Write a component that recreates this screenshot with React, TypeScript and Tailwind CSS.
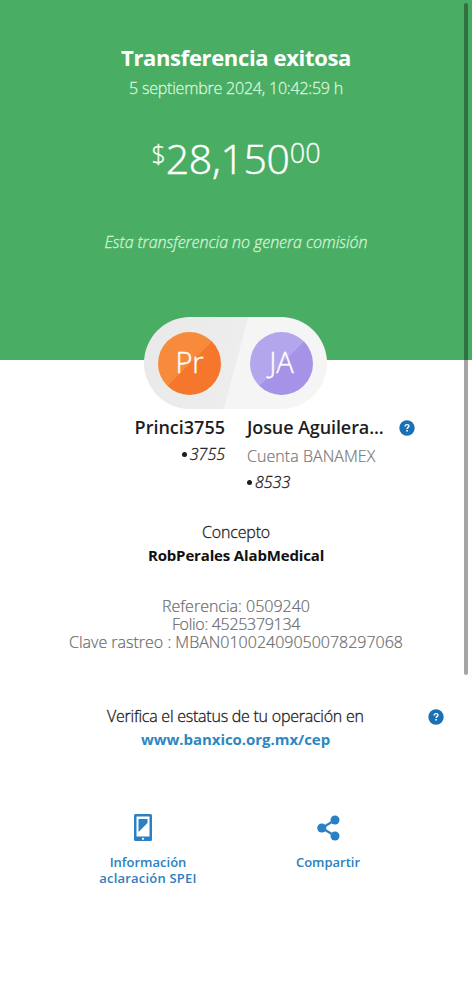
interface AvatarProps {
  initials: string;
  className: string;
}

function Avatar({ initials, className }: AvatarProps) {
  return (
    <div className={`flex size-[63px] items-center justify-center rounded-full pb-[3px] text-[29px] font-light leading-none text-white [-webkit-text-stroke:0.4px] ${className}`}>
      {initials}
    </div>
  );
}

function CardNumber({ digits }: { digits: string }) {
  return (
    <p className="flex items-center font-light italic leading-6 [-webkit-text-stroke:0.3px]">
      <span className="mr-[3px] size-[5px] rounded-full bg-[#1d1d1d]" />
      {digits}
    </p>
  );
}

function HelpIcon() {
  return (
    <svg viewBox="0 0 16 16" className="size-4 shrink-0">
      <circle cx="8" cy="8" r="7.7" fill="#1b70b3" />
      <path d="M6.1 6.5C6.1 5.2 7 4.6 8.1 4.6c1.1 0 1.9.6 1.9 1.5C10 7.4 8.1 7.4 8.1 9" fill="none" stroke="#fff" strokeWidth="1.4" />
      <rect x="7.3" y="10" width="1.6" height="1.5" fill="#fff" />
    </svg>
  );
}

function PhoneIcon() {
  return (
    <svg viewBox="0 0 18 27" className="mr-[11px] h-[27px] w-[18px]">
      <path
        d="M1.5 0h15A1.5 1.5 0 0 1 18 1.5v24a1.5 1.5 0 0 1-1.5 1.5h-15A1.5 1.5 0 0 1 0 25.5v-24A1.5 1.5 0 0 1 1.5 0ZM2.5 2.500v20h13v-20ZM9 23.700a1.100 1.100 0 1 0 0 2.200a1.100 1.100 0 1 0 0-2.200Z"
        fill="#2b80c5"
        fillRule="evenodd"
      />
      <path d="M4.500 5h9v4L4.500 18Z" fill="#2b80c5" />
    </svg>
  );
}

function ShareIcon() {
  return (
    <svg viewBox="0 0 23 26" className="mt-px h-[26px] w-[23px]" fill="#2b80c5">
      <path d="M18 5 5 13l13 8" fill="none" stroke="#2b80c5" strokeWidth="2.200" />
      <circle cx="18" cy="5" r="4.500" />
      <circle cx="4.800" cy="13" r="4.600" />
      <circle cx="18" cy="21" r="4.500" />
    </svg>
  );
}

export default function App() {
  return (
    <div className="relative h-[1000px] w-[472px] overflow-hidden bg-white font-['Open_Sans',sans-serif] text-[16px] text-[#1d1d1d]">
      {/* Result and amount */}
      <header className="flex h-[360px] flex-col items-center bg-[#49ae64] pt-[43px] text-white">
        <h1 className="text-[22px] font-bold leading-[28px] tracking-[-0.35px] whitespace-nowrap">Transferencia exitosa</h1>
        <p className="mt-[5px] font-light leading-6 tracking-[-0.2px] whitespace-nowrap text-[#daf5df] [-webkit-text-stroke:0.3px]">5 septiembre 2024, 10:42:59 h</p>
        <div className="mt-[34px] flex items-start font-light [-webkit-text-stroke:0.3px]">
          <span className="mt-[3px] text-[25px] leading-8">$</span>
          <span className="text-[41px] leading-[48px] tracking-[-0.3px] [-webkit-text-stroke:0.5px]">28,150</span>
          <span className="mt-[3px] text-[27px] leading-8">00</span>
        </div>
        <p className="mt-12 font-light italic leading-6 tracking-[-0.05px] whitespace-nowrap text-[#d2f3d8] [-webkit-text-stroke:0.3px]">Esta transferencia no genera comisión</p>
      </header>

      {/* Origin and destination */}
      <div className="relative ml-36 -mt-[43px] flex h-[92px] w-[183px] items-center justify-between rounded-full bg-[linear-gradient(105deg,#e9e9e9_0%,#ededed_50%,#f5f5f5_50.500%)] pr-[14px] pl-[14px]">
        <Avatar initials="Pr" className="bg-[linear-gradient(135deg,#f78b3b_50%,#f6772b_50.500%)]" />
        <Avatar initials="JA" className="bg-[linear-gradient(135deg,#b4a6ed_50%,#a593e7_50.500%)]" />
      </div>
      <section className="flex h-[90px] pt-[6px]">
        <div className="flex w-[225px] flex-col items-end">
          <p className="text-[18px] font-semibold leading-6">Princi3755</p>
          <div className="mt-[3px]">
            <CardNumber digits="3755" />
          </div>
        </div>
        <div className="ml-[22px] w-[152px]">
          <p className="text-[18px] font-semibold leading-6 tracking-[-0.1px] whitespace-nowrap">Josue Aguilera...</p>
          <p className="mt-[5px] font-light leading-6 tracking-[0.05px] whitespace-nowrap text-[#777] [-webkit-text-stroke:0.2px]">Cuenta BANAMEX</p>
          <div className="mt-[2px]">
            <CardNumber digits="8533" />
          </div>
        </div>
        <div className="pt-[5px]">
          <HelpIcon />
        </div>
      </section>

      {/* Transfer details */}
      <section className="flex flex-col items-center pt-[21px] whitespace-nowrap">
        <p className="font-light leading-6 tracking-[-0.15px] [-webkit-text-stroke:0.3px]">Concepto</p>
        <p className="text-[15px] font-bold leading-[22px] tracking-[-0.15px] text-[#111]">RobPerales AlabMedical</p>
        <div className="mt-[31px] text-center font-light leading-[18px] text-[#6a6a6a] [-webkit-text-stroke:0.2px]">
          <p>Referencia: 0509240</p>
          <p className="tracking-[-0.3px]">Folio: 4525379134</p>
          <p>Clave rastreo : MBAN01002409050078297068</p>
        </div>
      </section>
      <section className="mt-[53px] flex pl-[107px]">
        <div className="w-[257px] whitespace-nowrap">
          <p className="font-light leading-6 tracking-[-0.24px] [-webkit-text-stroke:0.3px]">Verifica el estatus de tu operación en</p>
          <a className="block text-center text-[15px] font-bold leading-[22px] tracking-[-0.05px] text-[#2c88c0]">www.banxico.org.mx/cep</a>
        </div>
        <div className="ml-16 pt-[5px]">
          <HelpIcon />
        </div>
      </section>

      {/* Actions */}
      <nav className="mt-[64px] flex items-start text-[13px] font-semibold leading-4 text-[#2b80bd]">
        <button className="ml-[88px] flex w-[120px] flex-col items-center">
          <PhoneIcon />
          <span className="mt-[13px] whitespace-nowrap">Información</span>
          <span className="tracking-[0.2px] whitespace-nowrap">aclaración SPEI</span>
        </button>
        <button className="ml-[60px] flex w-[120px] flex-col items-center">
          <ShareIcon />
          <span className="mt-[13px]">Compartir</span>
        </button>
      </nav>

      {/* Scroll indicator */}
      <div className="absolute top-[3px] right-[4px] h-[672px] w-[4px] rounded-full bg-black/35" />
    </div>
  );
}
